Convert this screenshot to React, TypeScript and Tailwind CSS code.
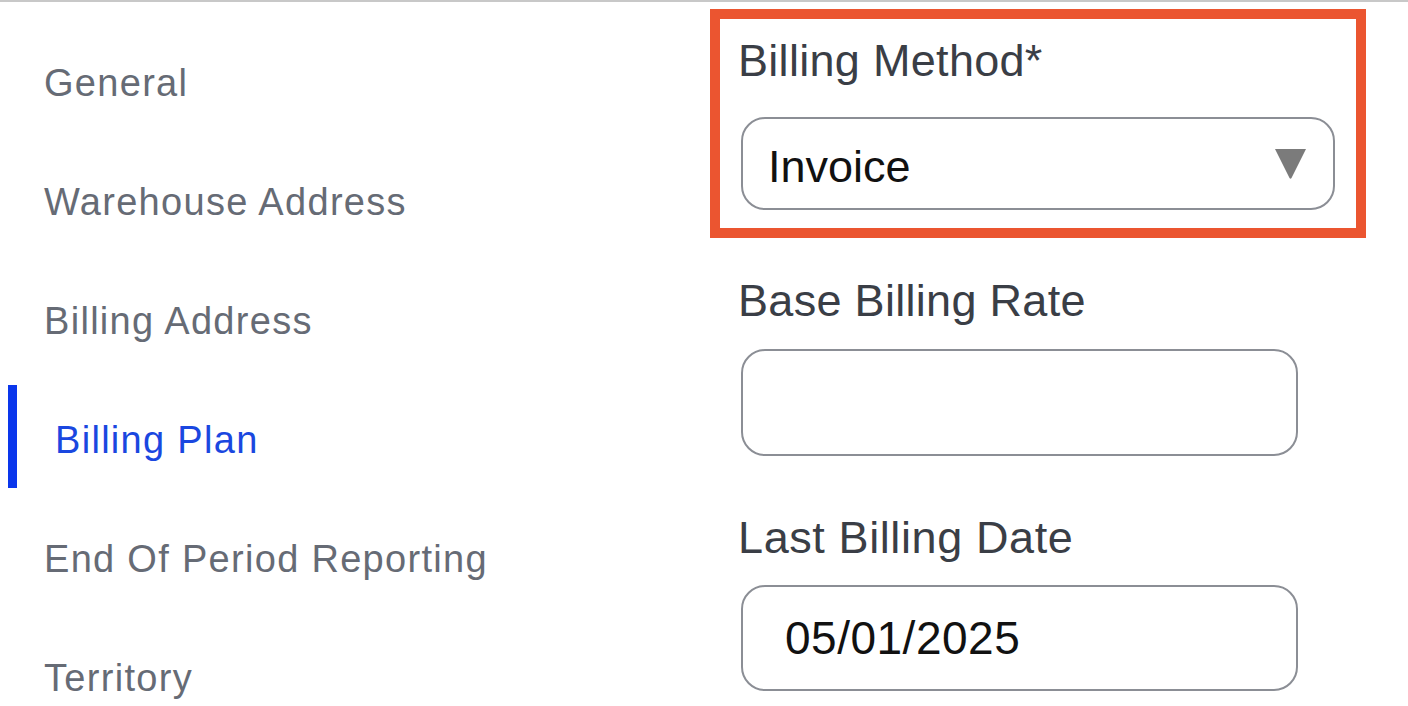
import React from 'react';

const navItems = [
  { label: 'General', active: false },
  { label: 'Warehouse Address', active: false },
  { label: 'Billing Address', active: false },
  { label: 'Billing Plan', active: true },
  { label: 'End Of Period Reporting', active: false },
  { label: 'Territory', active: false },
];

const font = { fontFamily: '"Liberation Sans", Arial, sans-serif' };

const Caret = () => (
  <svg width="33" height="33" viewBox="0 0 33 33" className="shrink-0">
    <path d="M1 2 H32 L17.5 31 Q16.5 32.5 15.5 31 Z" fill="#7b7b7b" />
  </svg>
);

export default function App() {
  return (
    <div className="w-[1408px] h-[706px] overflow-hidden bg-white" style={font}>
      <div className="h-[2px] bg-[#c8c8c8]" />
      <div className="flex">
        {/* left section nav */}
        <nav className="w-[710px] shrink-0 pt-[21px] flex flex-col">
          {navItems.map((item) => (
            <div key={item.label} className="h-[119px] flex items-center">
              {item.active ? (
                <>
                  <div className="ml-[8px] w-[9px] h-[103px] bg-[#0a36ec] self-start mt-[5px]" />
                  <span className="ml-[38px] text-[38px] leading-none tracking-[1.3px] text-[#1a47e0]">{item.label}</span>
                </>
              ) : (
                <span className="ml-[44px] text-[38px] leading-none tracking-[1.3px] text-[#666b75]">{item.label}</span>
              )}
            </div>
          ))}
        </nav>

        {/* right form */}
        <div className="flex-1 flex flex-col">
          <div className="mt-[7px] w-[656px] border-[10px] border-[#eb5530] pt-[19px] pl-[18px] pr-[21px] pb-[18px]">
            <div className="text-[45px] leading-none text-[#3a3e46] tracking-[0.3px]">Billing Method*</div>
            <div className="mt-[34px] ml-[3px] h-[93px] rounded-[24px] border-2 border-[#8b8e95] flex items-center justify-between pl-[25px] pr-[26px]">
              <span className="mt-[5px] text-[45px] leading-none text-[#111111]">Invoice</span>
              <Caret />
            </div>
          </div>

          <div className="pl-[28px]">
            <div className="mt-[40px] text-[45px] leading-none text-[#3a3e46] tracking-[0.3px]">Base Billing Rate</div>
            <div className="mt-[26px] ml-[3px] w-[557px] h-[107px] rounded-[24px] border-2 border-[#8b8e95]" />

            <div className="mt-[59px] text-[45px] leading-none text-[#3a3e46] tracking-[0.6px]">Last Billing Date</div>
            <div className="mt-[25px] ml-[3px] w-[557px] h-[106px] rounded-[24px] border-2 border-[#8b8e95] flex items-center pl-[42px]">
              <span className="text-[46px] leading-none tracking-[0.5px] text-[#111111]">05/01/2025</span>
            </div>
          </div>
        </div>
      </div>
    </div>
  );
}
